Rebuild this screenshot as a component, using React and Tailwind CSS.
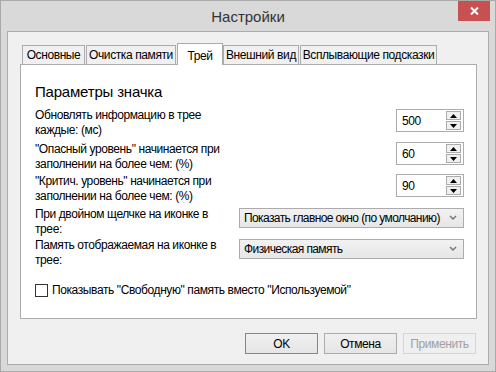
import React from "react";

const tabs = [
  { name: "Основные", w: "w-[63px] mr-[1px]" },
  { name: "Очистка памяти", w: "w-[90px] mr-[1px]" },
  { name: "Трей", w: "w-[46px]", active: true },
  { name: "Внешний вид", w: "w-[76px] mr-[1px]" },
  { name: "Всплывающие подсказки", w: "w-[137px]" },
];

const SpinBox = ({ value }) => {
  return (
    <div className="w-[68px] h-[23px] border border-[#acacac] bg-white flex items-center justify-between pl-[5px] pr-[2px]">
      <span className="text-[12px] leading-none">{value}</span>
      <div className="flex flex-col gap-[1px]">
        <div className="w-[15px] h-[9px] border border-[#acacac] bg-[#f0f0f0] flex items-center justify-center">
          <svg width="7" height="4" viewBox="0 0 7 4">
            <path d="M0 4 L3.5 0 L7 4 Z" fill="#000" />
          </svg>
        </div>
        <div className="w-[15px] h-[9px] border border-[#acacac] bg-[#f0f0f0] flex items-center justify-center">
          <svg width="7" height="4" viewBox="0 0 7 4">
            <path d="M0 0 L7 0 L3.5 4 Z" fill="#000" />
          </svg>
        </div>
      </div>
    </div>
  );
};

const Select = ({ value }) => {
  return (
    <div className="w-[225px] h-[20px] border border-[#acacac] bg-gradient-to-b from-[#f2f2f2] to-[#e6e6e6] flex items-center justify-between pl-[4px] pr-[6px]">
      <span className="text-[12px] leading-none whitespace-nowrap tracking-[-0.6px]">{value}</span>
      <svg width="8" height="6" viewBox="0 0 8 6">
        <path d="M1 1 L4 4 L7 1" stroke="#777" strokeWidth="1.5" fill="none" />
      </svg>
    </div>
  );
};

const Button = ({ children, primary, disabled }) => {
  let cls = "border-[#acacac] text-black bg-gradient-to-b from-[#f0f0f0] to-[#e5e5e5]";
  if (primary) cls = "border-[#3399ff] text-black bg-gradient-to-b from-[#f0f0f0] to-[#e5e5e5]";
  if (disabled) cls = "border-[#d5d5d5] text-[#a0a0a0] bg-[#efefef]";
  return (
    <div className={"w-[73px] h-[21px] border flex items-center justify-center text-[12px] " + cls}>
      {children}
    </div>
  );
};

const App = () => {
  return (
    <div
      className="w-[496px] h-[372px] bg-[#d9d9d9] border border-[#a9a9a9] flex flex-col text-black tracking-[-0.4px]"
      style={{ fontFamily: '"Liberation Sans", Arial, sans-serif' }}
    >
      <div className="h-[30px] flex items-start relative tracking-normal">
        <div className="flex-1 text-center pt-[5px] text-[15px] text-[#333]">Настройки</div>
        <div className="absolute right-[5px] top-0 w-[32px] h-[20px] bg-[#c75050] flex items-center justify-center">
          <svg width="9" height="8" viewBox="0 0 9 8">
            <path d="M1 0.5 L8 7.5 M8 0.5 L1 7.5" stroke="#fff" strokeWidth="2" />
          </svg>
        </div>
      </div>
      <div className="mx-[6px] h-[334px] border border-[#acacac] bg-[#f0f0f0] flex flex-col pt-[11px] px-[12px]">
        <div className="flex items-end h-[21px] pl-[2px]">
          {tabs.map((t) => {
            return (
              <div
                key={t.name}
                className={
                  "text-[12px] whitespace-nowrap shrink-0 border border-[#acacac] border-b-0 flex justify-center " +
                  t.w +
                  " " +
                  (t.active
                    ? "h-[22px] bg-white relative -mb-px z-10 items-start pt-[3px]"
                    : "h-[19px] bg-[#f0f0f0] items-center")
                }
              >
                {t.name}
              </div>
            );
          })}
        </div>
        <div className="w-[457px] h-[255px] border border-[#acacac] bg-white flex flex-col pl-[14px] pr-[12px] pt-[17px]">
          <div className="text-[15px] leading-[20px] tracking-[-0.2px]">Параметры значка</div>
          <div className="mt-[6px] flex justify-between items-start h-[33px]">
            <div className="text-[12px] leading-[15px] whitespace-nowrap">
              Обновлять информацию в трее
              <br />
              каждые: (мс)
            </div>
            <div className="mt-[1px]">
              <SpinBox value="500" />
            </div>
          </div>
          <div className="mt-[1px] flex justify-between items-start h-[32px]">
            <div className="text-[12px] leading-[15px] whitespace-nowrap">
              "Опасный уровень" начинается при
              <br />
              заполнении на более чем: (%)
            </div>
            <SpinBox value="60" />
          </div>
          <div className="flex justify-between items-start h-[33px]">
            <div className="text-[12px] leading-[15px] whitespace-nowrap">
              "Критич. уровень" начинается при
              <br />
              заполнении на более чем: (%)
            </div>
            <SpinBox value="90" />
          </div>
          <div className="flex justify-between items-start h-[31px]">
            <div className="text-[12px] leading-[15px] whitespace-nowrap">
              При двойном щелчке на иконке в
              <br />
              трее:
            </div>
            <div className="mt-[1px]">
              <Select value="Показать главное окно (по умолчанию)" />
            </div>
          </div>
          <div className="flex justify-between items-start h-[31px]">
            <div className="text-[12px] leading-[15px] whitespace-nowrap">
              Память отображаемая на иконке в
              <br />
              трее:
            </div>
            <div className="mt-[1px]">
              <Select value="Физическая память" />
            </div>
          </div>
          <div className="mt-[14px] flex items-center gap-[4px]">
            <div className="w-[13px] h-[13px] border border-[#333] bg-white" />
            <span className="text-[12px] leading-[15px]">
              Показывать "Свободную" память вместо "Используемой"
            </span>
          </div>
        </div>
        <div className="mt-[14px] flex justify-end gap-[6px] pr-[0px]">
          <Button primary>OK</Button>
          <Button>Отмена</Button>
          <Button disabled>Применить</Button>
        </div>
      </div>
    </div>
  );
};

export default App;
